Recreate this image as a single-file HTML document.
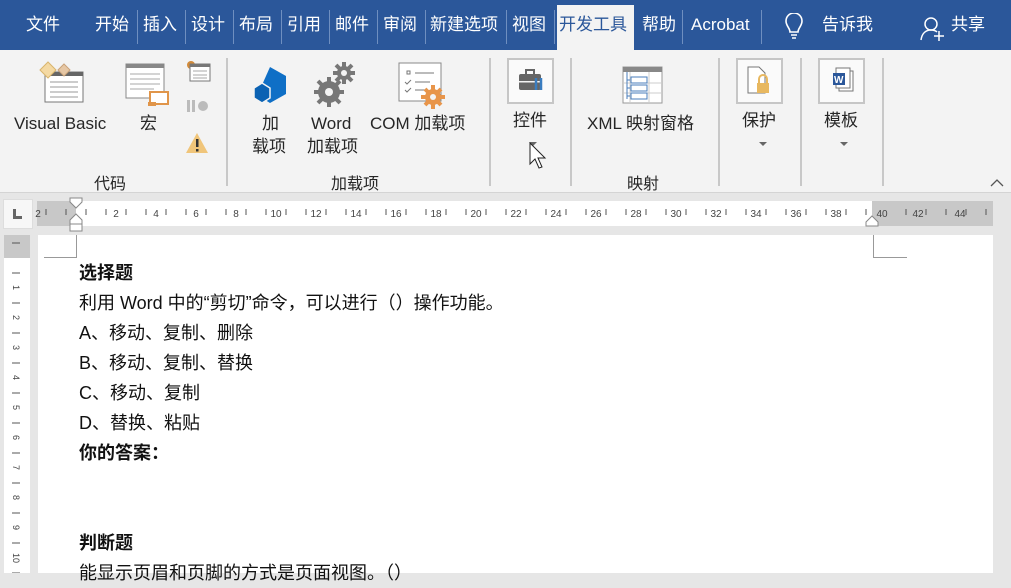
<!DOCTYPE html>
<html><head><meta charset="utf-8"><style>
*{margin:0;padding:0;box-sizing:border-box}
body{width:1011px;height:573px;overflow:hidden;background:#e6e6e6;font-family:"Liberation Sans","Noto Sans CJK SC",sans-serif;position:relative}
.a{position:absolute}
#top{left:0;top:0;width:1011px;height:50px;background:#2b579a}
.tab{position:absolute;top:14px;color:#fff;font-size:17px;line-height:22px;white-space:nowrap}
.sep{position:absolute;top:10px;width:1px;height:34px;background:#6f8fc0}
#rib{left:0;top:50px;width:1011px;height:143px;background:#f3f3f3;border-bottom:1px solid #d4d4d4}
.rt{position:absolute;color:#262626;font-size:17px;white-space:nowrap;text-align:center;line-height:24px}
.gs{position:absolute;top:8px;width:2px;height:128px;background:#c8c8c8}
.gl{position:absolute;top:118px;color:#262626;font-size:16px}
.box{position:absolute;width:47px;height:46px;border:2px solid #c6c6c6;background:#fafafa}
.doc{position:absolute;left:79px;font-size:18px;color:#111;line-height:30px;white-space:nowrap}
.rn{position:absolute;top:207px;font-size:10px;color:#444;font-family:"Liberation Sans",sans-serif}
.vn{position:absolute;left:12px;font-size:9px;color:#444;transform:rotate(90deg)}
</style></head><body>
<div class="a" id="top"></div>
<div class="tab" style="left:26px">文件</div>
<div class="tab" style="left:95px">开始</div><div class="sep" style="left:137px"></div>
<div class="tab" style="left:143px">插入</div><div class="sep" style="left:185px"></div>
<div class="tab" style="left:191px">设计</div><div class="sep" style="left:233px"></div>
<div class="tab" style="left:239px">布局</div><div class="sep" style="left:281px"></div>
<div class="tab" style="left:287px">引用</div><div class="sep" style="left:329px"></div>
<div class="tab" style="left:335px">邮件</div><div class="sep" style="left:377px"></div>
<div class="tab" style="left:383px">审阅</div><div class="sep" style="left:425px"></div>
<div class="tab" style="left:430px">新建选项</div><div class="sep" style="left:506px"></div>
<div class="tab" style="left:512px">视图</div><div class="sep" style="left:554px"></div>
<div class="a" style="left:557px;top:5px;width:77px;height:46px;background:#f3f3f3"></div>
<div class="tab" style="left:559px;color:#2b579a">开发工具</div>
<div class="tab" style="left:642px">帮助</div><div class="sep" style="left:682px"></div>
<div class="tab" style="left:691px">Acrobat</div><div class="sep" style="left:761px"></div>
<svg class="a" style="left:783px;top:13px" width="22" height="28" viewBox="0 0 22 28"><path d="M7 19 C7 15 3 13 3 8 A8 8 0 0 1 19 8 C19 13 15 15 15 19 Z M8 22 H14 M9 25 H13" fill="none" stroke="#fff" stroke-width="1.6"/></svg>
<div class="tab" style="left:822px">告诉我</div>
<svg class="a" style="left:920px;top:16px" width="26" height="26" viewBox="0 0 26 26"><circle cx="11" cy="8" r="6" fill="none" stroke="#fff" stroke-width="1.5"/><path d="M1 24 C2 17 6 14 11 14 C14 14 16 15 17 16 M19 15 V25 M14 20 H24" fill="none" stroke="#fff" stroke-width="1.5"/></svg>
<div class="tab" style="left:951px">共享</div>

<div class="a" id="rib"></div>
<!-- code group icons -->
<svg class="a" style="left:38px;top:60px" width="48" height="44"><rect x="7" y="12" width="38" height="30" fill="#fff" stroke="#777"/><rect x="7" y="12" width="38" height="4" fill="#666"/><path d="M12 22H40M12 27H40M12 32H40M12 37H40" stroke="#999"/><path d="M2 10 L10 2 L18 10 L10 18Z" fill="#f4d9a3" stroke="#d9b56d"/><path d="M20 10 L26 4 L32 10 L26 16Z" fill="#e6c7a5" stroke="#c9a27a"/></svg>
<div class="rt" style="left:14px;top:112px">Visual Basic</div>
<svg class="a" style="left:124px;top:62px" width="48" height="46"><rect x="2" y="2" width="38" height="34" fill="#fff" stroke="#888"/><rect x="2" y="2" width="38" height="4" fill="#888"/><path d="M6 12H36M6 17H36M6 22H36M6 27H30" stroke="#aaa"/><path d="M26 30 H44 V42 H30 Q26 44 26 40Z" fill="#fff" stroke="#e0954a" stroke-width="2"/><rect x="24" y="40" width="8" height="4" fill="#e0954a"/></svg>
<div class="rt" style="left:140px;top:112px">宏</div>
<svg class="a" style="left:186px;top:60px" width="26" height="100"><circle cx="5" cy="5" r="4" fill="#d38b3a"/><rect x="4" y="4" width="20" height="17" fill="#fff" stroke="#777"/><rect x="4" y="4" width="20" height="3" fill="#777"/><path d="M7 11H21M7 15H21M7 18H21" stroke="#aaa"/><rect x="1" y="40" width="3" height="12" fill="#bbb"/><rect x="6" y="40" width="3" height="12" fill="#bbb"/><circle cx="17" cy="46" r="5" fill="#bbb"/><path d="M11 73 L22 93 H0Z" fill="#f0c57a"/><rect x="10" y="79" width="2.5" height="8" fill="#333"/><rect x="10" y="89" width="2.5" height="2.5" fill="#333"/></svg>
<div class="gl" style="left:94px;top:170px">代码</div>
<div class="gs" style="left:226px;top:58px"></div>
<!-- addins -->
<svg class="a" style="left:252px;top:65px" width="36" height="40"><path d="M18 2 L34 11 V29 L18 38 L10 33 V20 Z" fill="#0f6fc6"/><path d="M10 18 L18 23 V33 L10 38 L2 33 V23Z" fill="#0b62b3" stroke="#f3f3f3" stroke-width="1.5"/></svg>
<div class="rt" style="left:262px;top:112px">加</div>
<div class="rt" style="left:252px;top:135px">载项</div>
<svg class="a" style="left:313px;top:61px" width="42" height="46"><g fill="#777"><circle cx="31" cy="12" r="7"/><circle cx="16" cy="31" r="11"/></g><circle cx="31" cy="12" r="3" fill="#f3f3f3"/><circle cx="16" cy="31" r="4" fill="#f3f3f3"/><g stroke="#777" stroke-width="4"><path d="M31 1V23M20 12H42M23 4L39 20M39 4L23 20"/><path d="M16 16V46M1 31H31M5 20L27 42M27 20L5 42"/></g><circle cx="31" cy="12" r="3" fill="#f3f3f3"/><circle cx="16" cy="31" r="4" fill="#f3f3f3"/></svg>
<div class="rt" style="left:311px;top:112px">Word</div>
<div class="rt" style="left:307px;top:135px">加载项</div>
<svg class="a" style="left:398px;top:62px" width="50" height="48"><rect x="1" y="1" width="42" height="38" fill="#fff" stroke="#888"/><path d="M9 9h3v3h-3zM17 11H36M7 20l2 2 4-4M17 20H32M7 28l2 2 4-4M17 28H28" stroke="#777" fill="none"/><circle cx="35" cy="35" r="8" fill="#e8954a"/><g stroke="#e8954a" stroke-width="4"><path d="M35 23V47M23 35H47M27 27L43 43M43 27L27 43"/></g><circle cx="35" cy="35" r="3" fill="#f3f3f3"/></svg>
<div class="rt" style="left:370px;top:112px">COM 加载项</div>
<div class="gl" style="left:331px;top:170px">加载项</div>
<div class="gs" style="left:489px;top:58px"></div>
<!-- controls -->
<div class="box" style="left:507px;top:58px"></div>
<svg class="a" style="left:518px;top:68px" width="28" height="24"><rect x="1" y="6" width="22" height="16" rx="2" fill="#666"/><rect x="8" y="2" width="8" height="5" fill="none" stroke="#666" stroke-width="2"/><rect x="1" y="13" width="22" height="1.5" fill="#f3f3f3"/><path d="M18 10v12M23 10v12" stroke="#3a7dc0" stroke-width="2.5"/></svg>
<div class="rt" style="left:513px;top:109px">控件</div>
<div class="a" style="left:529px;top:142px;border:4px solid transparent;border-top:4px solid #666"></div>
<svg class="a" style="left:529px;top:142px" width="22" height="30"><path d="M1 1 V22 L6 17 L10 26 L13 25 L9 16 L16 16Z" fill="#fff" stroke="#222" stroke-width="1"/></svg>
<div class="gs" style="left:570px;top:58px"></div>
<svg class="a" style="left:622px;top:66px" width="42" height="38"><rect x="1" y="1" width="39" height="36" fill="#fff" stroke="#999"/><rect x="1" y="1" width="39" height="5" fill="#888"/><path d="M8 6V37M27 6V37M1 17H40M1 27H40" stroke="#ccc"/><path d="M5 6V33M5 14H8M5 22H8M5 30H8" stroke="#4a7ebb"/><rect x="9" y="11" width="16" height="6" fill="none" stroke="#4a7ebb"/><rect x="9" y="19" width="16" height="6" fill="none" stroke="#4a7ebb"/><rect x="9" y="27" width="16" height="6" fill="none" stroke="#4a7ebb"/></svg>
<div class="rt" style="left:587px;top:112px">XML 映射窗格</div>
<div class="gl" style="left:627px;top:170px">映射</div>
<div class="gs" style="left:718px;top:58px"></div>
<div class="box" style="left:736px;top:58px"></div>
<svg class="a" style="left:746px;top:66px" width="28" height="30"><path d="M2 1H13L19 7V27H2Z" fill="#fff" stroke="#777"/><rect x="11" y="17" width="12" height="10" fill="#e8b860"/><path d="M13 17V13A4 4 0 0 1 21 13V17" fill="none" stroke="#e8b860" stroke-width="2"/></svg>
<div class="rt" style="left:742px;top:109px">保护</div>
<div class="a" style="left:759px;top:142px;border:4px solid transparent;border-top:4px solid #666"></div>
<div class="gs" style="left:800px;top:58px"></div>
<div class="box" style="left:818px;top:58px"></div>
<svg class="a" style="left:831px;top:67px" width="26" height="28"><rect x="8" y="4" width="14" height="20" fill="#fff" stroke="#777"/><rect x="5" y="1" width="14" height="20" fill="#fff" stroke="#777"/><rect x="2" y="6" width="12" height="12" fill="#2b579a"/><text x="3" y="16" font-size="10" fill="#fff" font-family="Liberation Sans" font-weight="bold">W</text></svg>
<div class="rt" style="left:824px;top:109px">模板</div>
<div class="a" style="left:840px;top:142px;border:4px solid transparent;border-top:4px solid #666"></div>
<div class="gs" style="left:882px;top:58px"></div>
<svg class="a" style="left:990px;top:178px" width="14" height="10"><path d="M1 8 L7 2 L13 8" fill="none" stroke="#555" stroke-width="1.3"/></svg>

<!-- rulers -->
<div class="a" style="left:3px;top:199px;width:30px;height:30px;background:#f7f7f7;border:1px solid #ddd"></div>
<div class="a" style="left:13px;top:209px;width:3px;height:10px;background:#666"></div><div class="a" style="left:13px;top:216px;width:9px;height:3px;background:#666"></div>
<div class="a" style="left:37px;top:201px;width:956px;height:25px;background:#fff"></div>
<div class="a" style="left:37px;top:201px;width:39px;height:25px;background:#c8c8c8"></div>
<div class="a" style="left:872px;top:201px;width:121px;height:25px;background:#c8c8c8"></div>
<div id="rn"></div>
<svg class="a" style="left:69px;top:197px" width="16" height="36"><path d="M1 1H13V5L7 11L1 5Z" fill="#fff" stroke="#888"/><path d="M7 17L13 23V27H1V23Z" fill="#fff" stroke="#888"/><rect x="1" y="27" width="12" height="7" fill="#fff" stroke="#888"/></svg>
<svg class="a" style="left:865px;top:215px" width="14" height="12"><path d="M7 1L13 7V11H1V7Z" fill="#fff" stroke="#888"/></svg>
<div class="a" style="left:4px;top:235px;width:26px;height:338px;background:#fff"></div>
<div class="a" style="left:4px;top:235px;width:26px;height:23px;background:#c8c8c8"></div>
<div class="a" style="left:38px;top:235px;width:955px;height:338px;background:#fff"></div>
<div class="a" style="left:44px;top:257px;width:33px;height:1px;background:#999"></div>
<div class="a" style="left:76px;top:235px;width:1px;height:23px;background:#999"></div>
<div class="a" style="left:874px;top:257px;width:33px;height:1px;background:#999"></div>
<div class="a" style="left:873px;top:235px;width:1px;height:23px;background:#999"></div>

<div class="doc" style="top:258px;font-weight:bold">选择题</div>
<div class="doc" style="top:288px">利用 Word 中的“剪切”命令，可以进行（）操作功能。</div>
<div class="doc" style="top:318px">A、移动、复制、删除</div>
<div class="doc" style="top:348px">B、移动、复制、替换</div>
<div class="doc" style="top:378px">C、移动、复制</div>
<div class="doc" style="top:408px">D、替换、粘贴</div>
<div class="doc" style="top:438px;font-weight:bold">你的答案：</div>
<div class="doc" style="top:528px;font-weight:bold">判断题</div>
<div class="doc" style="top:558px">能显示页眉和页脚的方式是页面视图。（）</div>

<svg class="a" style="left:0;top:195px" width="1011" height="378">
<g font-family="Liberation Sans" font-size="10" fill="#444" text-anchor="middle">
<text x="116" y="22">2</text><text x="156" y="22">4</text><text x="196" y="22">6</text><text x="236" y="22">8</text><text x="276" y="22">10</text><text x="316" y="22">12</text><text x="356" y="22">14</text><text x="396" y="22">16</text><text x="436" y="22">18</text><text x="476" y="22">20</text><text x="516" y="22">22</text><text x="556" y="22">24</text><text x="596" y="22">26</text><text x="636" y="22">28</text><text x="676" y="22">30</text><text x="716" y="22">32</text><text x="756" y="22">34</text><text x="796" y="22">36</text><text x="836" y="22">38</text><text x="882" y="22">40</text><text x="918" y="22">42</text><text x="960" y="22">44</text><text x="38" y="22">2</text>
</g>
<g stroke="#555" stroke-width="1">
<path d="M46 14v6M66 14v6M86 14v6M106 14v6M126 14v6M146 14v6M166 14v6M186 14v6M206 14v6M226 14v6M246 14v6M266 14v6M286 14v6M306 14v6M326 14v6M346 14v6M366 14v6M386 14v6M406 14v6M426 14v6M446 14v6M466 14v6M486 14v6M506 14v6M526 14v6M546 14v6M566 14v6M586 14v6M606 14v6M626 14v6M646 14v6M666 14v6M686 14v6M706 14v6M726 14v6M746 14v6M766 14v6M786 14v6M806 14v6M826 14v6M846 14v6M866 14v6M906 14v6M926 14v6M946 14v6M966 14v6M986 14v6"/>
<path d="M12 48h8M12 78h8M12 108h8M12 138h8M12 168h8M12 198h8M12 228h8M12 258h8M12 288h8M12 318h8M12 348h8M12 378h8"/>
</g>
<g font-family="Liberation Sans" font-size="9" fill="#444">
<text transform="translate(13,90) rotate(90)">1</text><text transform="translate(13,120) rotate(90)">2</text><text transform="translate(13,150) rotate(90)">3</text><text transform="translate(13,180) rotate(90)">4</text><text transform="translate(13,210) rotate(90)">5</text><text transform="translate(13,240) rotate(90)">6</text><text transform="translate(13,270) rotate(90)">7</text><text transform="translate(13,300) rotate(90)">8</text><text transform="translate(13,330) rotate(90)">9</text><text transform="translate(13,358) rotate(90)">10</text>
</g>
</svg>
</body></html>
